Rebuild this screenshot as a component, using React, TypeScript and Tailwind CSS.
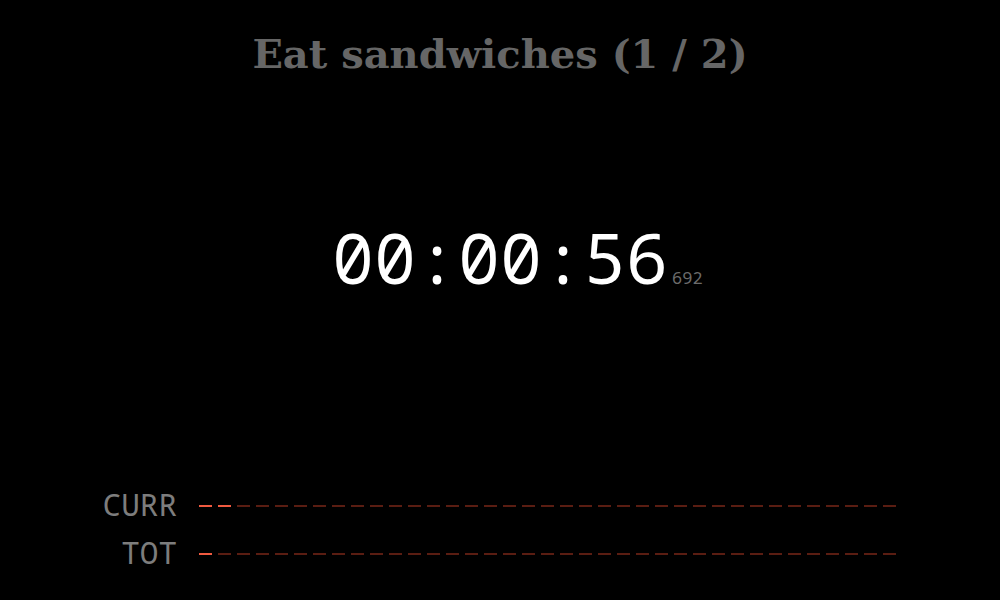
const DASHES = 37;

function ProgressRow({ label, filled }: { label: string; filled: number }) {
  return (
    <div className="flex h-[48px] items-center">
      <div className="-mt-[3px] w-[177px] text-right font-['Noto_Sans_Mono',monospace] text-[31px] leading-none text-[#7d7d7d]">
        {label}
      </div>
      <div className="ml-[22px] flex gap-[6px]">
        {Array.from({ length: DASHES }).map((_, i) => (
          <span
            key={i}
            className={i < filled ? 'h-[2px] w-[13px] bg-[#f05a40]' : 'h-[2px] w-[13px] bg-[#5a1d12]'}
          />
        ))}
      </div>
    </div>
  );
}

export default function App() {
  return (
    <div className="flex h-[600px] w-full flex-col bg-black">
      {/* titulo de la tarea */}
      <h1 className="pt-[34px] text-center font-['DejaVu_Serif',serif] text-[40px] font-semibold leading-none text-[#666666]">
        Eat sandwiches (1 / 2)
      </h1>

      {/* reloj */}
      <div className="mt-[148px] flex justify-center">
        <span className="relative font-['Noto_Sans_Mono',monospace] text-[70px] leading-none text-white">
          00:00:56
          <span className="absolute bottom-[6px] left-full pl-[4px] text-[17px] leading-none text-[#6b6b6b]">
            692
          </span>
        </span>
      </div>

      {/* barras de progreso */}
      <div className="mt-auto pb-[22px]">
        <ProgressRow label="CURR" filled={2} />
        <ProgressRow label="TOT" filled={1} />
      </div>
    </div>
  );
}
